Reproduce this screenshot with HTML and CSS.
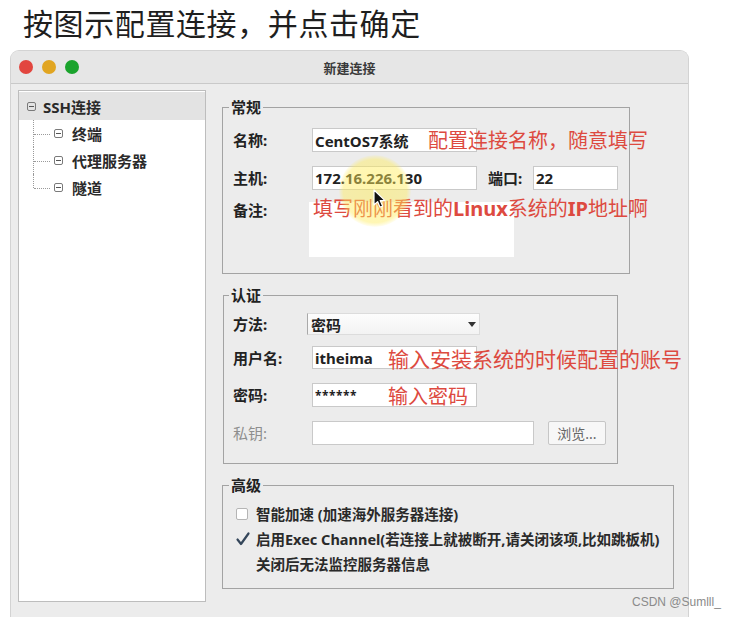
FILE: index.html
```html
<!DOCTYPE html>
<html lang="zh-CN">
<head>
    <meta charset="UTF-8">
    <meta name="viewport" content="width=device-width, initial-scale=1.0">
    <title>新建连接</title>
    <link rel="stylesheet" href="styles.css">
</head>
<body>
<div class="page">
    <h1 class="caption">按图示配置连接，并点击确定</h1>

    <div class="window">
        <div class="titlebar">
            <div class="lights">
                <span class="light red"></span>
                <span class="light yellow"></span>
                <span class="light green"></span>
            </div>
            <div class="wtitle">新建连接</div>
            <div></div>
        </div>

        <div class="wbody">
            <div class="tree">
                <div class="node root"><span class="box"></span>SSH连接</div>
                <div class="children">
                    <div class="node child"><span class="box"></span>终端</div>
                    <div class="node child"><span class="box"></span>代理服务器</div>
                    <div class="node child"><span class="box"></span>隧道</div>
                </div>
            </div>

            <div class="forms">
                <fieldset class="group general">
                    <legend>常规</legend>
                    <div class="row r-name">
                        <span class="label">名称:</span>
                        <input class="field w-main" type="text" value="CentOS7系统">
                    </div>
                    <div class="row r-host">
                        <span class="label">主机:</span>
                        <input class="field w-main" type="text" value="172.16.226.130">
                        <span class="label port-label">端口:</span>
                        <input class="field w-port" type="text" value="22">
                    </div>
                    <div class="row r-note">
                        <span class="label">备注:</span>
                        <div class="memo"></div>
                    </div>
                </fieldset>

                <fieldset class="group auth">
                    <legend>认证</legend>
                    <div class="row r-method">
                        <span class="label">方法:</span>
                        <div class="combo"><span>密码</span><span class="caret"></span></div>
                    </div>
                    <div class="row r-user">
                        <span class="label">用户名:</span>
                        <input class="field w-main" type="text" value="itheima">
                    </div>
                    <div class="row r-pass">
                        <span class="label">密码:</span>
                        <input class="field w-main pass" type="text" value="******">
                    </div>
                    <div class="row r-key">
                        <span class="label muted">私钥:</span>
                        <input class="field w-key" type="text" value="">
                        <button class="browse">浏览...</button>
                    </div>
                </fieldset>

                <fieldset class="group advanced">
                    <legend>高级</legend>
                    <div class="check-row">
                        <span class="checkbox"></span>
                        <span>智能加速 (加速海外服务器连接)</span>
                    </div>
                    <div class="check-row">
                        <span class="mark">
                            <svg width="14" height="14" viewBox="0 0 14 14"><path d="M1.5 7.5 L5 12 L12.5 1.5" fill="none" stroke="#34465a" stroke-width="2.2" stroke-linecap="round" stroke-linejoin="round"/></svg>
                        </span>
                        <span>启用Exec Channel(若连接上就被断开,请关闭该项,比如跳板机)</span>
                    </div>
                    <div class="check-row note">关闭后无法监控服务器信息</div>
                </fieldset>
            </div>
        </div>
    </div>

    <!-- annotations drawn over the screenshot -->
    <div class="tip tip-name">配置连接名称，随意填写</div>
    <div class="tip tip-host">填写刚刚看到的<b>Linux</b>系统的<b>IP</b>地址啊</div>
    <div class="tip tip-user">输入安装系统的时候配置的账号</div>
    <div class="tip tip-pass">输入密码</div>

    <div class="spot"></div>
    <svg class="cursor" width="13" height="20" viewBox="0 0 13 20">
        <path d="M1 1 L1 16 L4.6 12.6 L7 18.2 L9.6 17.1 L7.2 11.6 L12 11.6 Z" fill="#111" stroke="#fff" stroke-width="1.2" stroke-linejoin="round"/>
    </svg>

    <div class="watermark">CSDN @Sumlll_</div>
</div>
</body>
</html>
```

FILE: styles.css
```css
body {
    margin: 0;
    background: #fff;
    font-family: "Noto Sans", "Noto Sans CJK SC", sans-serif;
    color: #222;
}
.page {
    position: relative;
    width: 737px;
    height: 617px;
    overflow: hidden;
}
.caption {
    margin: 0;
    height: 50px;
    line-height: 44px;
    padding-left: 23px;
    font-family: "Noto Sans CJK SC", sans-serif;
    font-size: 30px;
    font-weight: normal;
    letter-spacing: 0.6px;
    color: #1f1f1f;
}

/* window frame */
.window {
    margin-left: 10px;
    width: 679px;
    height: 567px;
    box-sizing: border-box;
    background: #ececec;
    border: 1px solid #d3d3d3;
    border-bottom: none;
    border-radius: 9px 9px 0 0;
    overflow: hidden;
}
.titlebar {
    display: grid;
    grid-template-columns: 1fr auto 1fr;
    align-items: center;
    height: 32px;
    background: #e6e6e6;
    border-bottom: 1px solid #c9c9c9;
}
.lights {
    display: flex;
    gap: 9px;
    padding-left: 8px;
}
.light {
    width: 14px;
    height: 14px;
    border-radius: 50%;
}
.light.red { background: #e2463f; }
.light.yellow { background: #e1a521; }
.light.green { background: #1aa32c; }
.wtitle {
    font-size: 13px;
    font-weight: bold;
    color: #3a3a3a;
}

.wbody {
    display: flex;
    gap: 16px;
    padding: 6px 0 0 7px;
}

/* left tree */
.tree {
    flex: none;
    width: 188px;
    height: 512px;
    box-sizing: border-box;
    background: #fff;
    border: 1px solid #bdbdbd;
    padding-top: 1px;
}
.node {
    display: flex;
    align-items: center;
    font-size: 15px;
    font-weight: bold;
    color: #2a2a2a;
}
.root {
    height: 28px;
    padding-left: 8px;
    gap: 7px;
    background: #e3e3e3;
}
.children {
    margin-left: 14px;
}
.child {
    position: relative;
    height: 27px;
    padding-left: 21px;
    gap: 9px;
}
.child::before {
    content: "";
    position: absolute;
    left: 0;
    top: 0;
    bottom: 0;
    border-left: 1px dotted #9a9a9a;
}
.child:last-child::before {
    bottom: 50%;
}
.child::after {
    content: "";
    position: absolute;
    left: 1px;
    top: 50%;
    width: 16px;
    border-top: 1px dotted #9a9a9a;
}
.box {
    flex: none;
    width: 9px;
    height: 9px;
    box-sizing: border-box;
    border: 1px solid #7a7a7a;
    border-radius: 2px;
    background: linear-gradient(#555, #555) center / 5px 1px no-repeat;
}

/* groups */
.forms {
    padding-top: 8px;
}
.group {
    margin: 0;
    border: 1px solid #a3a3a3;
    box-sizing: border-box;
    min-width: 0;
}
.group legend {
    padding: 0 2px;
    margin-left: -4px;
    font-size: 15px;
    font-weight: bold;
    line-height: 18px;
    color: #222;
}
.general {
    width: 408px;
    padding: 12px 10px 16px;
}
.auth {
    width: 395px;
    margin: 12px 0 0 1px;
    padding: 9px 9px 18px;
}
.advanced {
    width: 452px;
    margin-top: 12px;
    padding: 7px 10px 12px;
}

.row {
    display: flex;
    align-items: center;
}
.label {
    flex: none;
    width: 79px;
    font-size: 15px;
    font-weight: bold;
    line-height: 18px;
}
.label.muted {
    color: #8e8e8e;
    font-weight: normal;
}
.port-label {
    width: 45px;
    margin-left: 11px;
}
.field {
    box-sizing: border-box;
    height: 24px;
    margin: 0;
    padding: 0 2px;
    border: 1px solid #c9c9c9;
    background: #fff;
    font-family: "Noto Sans", "Noto Sans CJK SC", sans-serif;
    font-size: 15px;
    font-weight: bold;
    color: #222;
    outline: none;
}
.w-main { width: 165px; }
.w-port { width: 85px; }
.w-key { width: 222px; }
.pass {
    font-size: 12px;
    letter-spacing: 0.5px;
}

.r-name { margin-bottom: 14px; }
.r-host { margin-bottom: 12px; }
.r-note { align-items: flex-start; }
.r-note .label { line-height: 16px; }
.memo {
    width: 205px;
    height: 55px;
    margin-left: -3px;
    background: #fff;
}

.r-method { margin-bottom: 11px; }
.r-user { margin-bottom: 14px; }
.r-user .field { height: 23px; }
.r-pass { margin-bottom: 14px; }
.combo {
    display: flex;
    justify-content: space-between;
    align-items: center;
    box-sizing: border-box;
    width: 173px;
    height: 22px;
    margin-left: -5px;
    padding: 0 3px 0 3px;
    border: 1px solid #dcdcdc;
    border-left-color: #a9a9a9;
    background: linear-gradient(#fdfdfd, #f3f3f3);
    font-size: 15px;
    font-weight: bold;
}
.caret {
    width: 0;
    height: 0;
    border-left: 4px solid transparent;
    border-right: 4px solid transparent;
    border-top: 5px solid #333;
}
.browse {
    box-sizing: border-box;
    width: 58px;
    height: 24px;
    margin-left: 14px;
    padding: 0;
    border: 1px solid #c6c6c6;
    border-radius: 2px;
    background: #f7f7f7;
    font-family: "Noto Sans", "Noto Sans CJK SC", sans-serif;
    font-size: 14px;
    color: #666;
}

.check-row {
    display: flex;
    align-items: center;
    gap: 8px;
    height: 25px;
    font-size: 14.5px;
    font-weight: bold;
    color: #2a2a2a;
    white-space: nowrap;
}
.checkbox {
    flex: none;
    width: 12px;
    height: 12px;
    margin-left: 3px;
    box-sizing: border-box;
    border: 1px solid #b5b5b5;
    border-radius: 2px;
    background: #fff;
}
.mark {
    flex: none;
    width: 12px;
    height: 14px;
    margin-left: 3px;
}
.mark svg {
    overflow: visible;
    display: block;
}
.check-row.note {
    padding-left: 23px;
}

/* overlays on top of the dialog */
.tip {
    position: absolute;
    font-family: "Noto Sans CJK SC", sans-serif;
    font-size: 20px;
    line-height: 24px;
    color: #dd4a40;
    white-space: nowrap;
}
.tip b {
    font-family: "Noto Sans", sans-serif;
}
.tip-name { left: 428px; top: 128px; }
.tip-host { left: 313px; top: 196px; }
.tip-user { left: 388px; top: 346px; font-size: 21px; }
.tip-pass { left: 388px; top: 384px; }

.spot {
    position: absolute;
    left: 339px;
    top: 155px;
    width: 72px;
    height: 72px;
    border-radius: 50%;
    background: radial-gradient(circle, rgba(255, 236, 90, 0.5) 0%, rgba(255, 236, 90, 0.45) 62%, rgba(255, 236, 90, 0) 72%);
}
.cursor {
    position: absolute;
    left: 373px;
    top: 189px;
}
.watermark {
    position: absolute;
    left: 632px;
    top: 594px;
    font-family: "Liberation Sans", Arial, sans-serif;
    font-size: 12px;
    line-height: 16px;
    color: #8a8a8a;
}
```
